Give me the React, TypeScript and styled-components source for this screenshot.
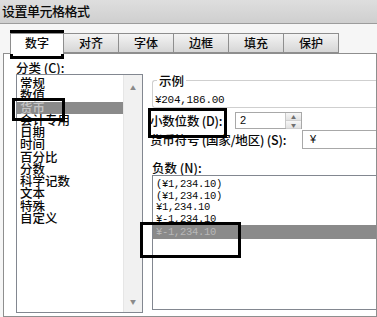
import React from 'react';
import styled, { createGlobalStyle } from 'styled-components';

const GlobalStyle = createGlobalStyle`
  html, body {
    margin: 0;
    padding: 0;
    background: #ffffff;
  }
`;

const categories = [
  '常规',
  '数值',
  '货币',
  '会计专用',
  '日期',
  '时间',
  '百分比',
  '分数',
  '科学记数',
  '文本',
  '特殊',
  '自定义',
];

const tabs = ['数字', '对齐', '字体', '边框', '填充', '保护'];

const negatives = [
  '(¥1,234.10)',
  '(¥1,234.10)',
  '¥1,234.10',
  '¥-1,234.10',
  '¥-1,234.10',
];

const callouts = [
  { x: 10, y: 30, w: 54, h: 29 },
  { x: 12, y: 98, w: 53, h: 23 },
  { x: 148, y: 108, w: 79, h: 30 },
  { x: 140, y: 222, w: 101, h: 36 },
];

export default function App() {
  return (
    <Dialog>
      <GlobalStyle />
      <TitleBar>设置单元格格式</TitleBar>
      <TabRow>
        {tabs.map((t, i) => (
          <Tab key={t} $active={i === 0} $first={i === 0}>
            {t}
          </Tab>
        ))}
      </TabRow>
      <Panel>
        <LeftColumn>
          <FieldLabel>分类 (C):</FieldLabel>
          <CategoryList>
            <CategoryItems>
              {categories.map((c, i) => (
                <CategoryItem key={c} $selected={i === 2}>
                  {c}
                </CategoryItem>
              ))}
            </CategoryItems>
            <ScrollBar>
              <ScrollArrow>▲</ScrollArrow>
              <ScrollArrow>▼</ScrollArrow>
            </ScrollBar>
          </CategoryList>
        </LeftColumn>
        <RightColumn>
          <SampleGroup>
            <SampleLegend>示例</SampleLegend>
            <SampleValue>¥204,186.00</SampleValue>
          </SampleGroup>
          <FormRow $top={4} $height={17}>
            <RowLabel $width={85}>小数位数 (D):</RowLabel>
            <SpinBox>
              <SpinValue>2</SpinValue>
              <SpinButtons>
                <SpinButton>▲</SpinButton>
                <SpinButton>▼</SpinButton>
              </SpinButtons>
            </SpinBox>
          </FormRow>
          <FormRow $top={1} $height={19}>
            <RowLabel $width={152}>货币符号 (国家/地区) (S):</RowLabel>
            <SymbolBox>¥</SymbolBox>
          </FormRow>
          <NegativeLabel>负数 (N):</NegativeLabel>
          <NegativeList>
            {negatives.map((n, i) => (
              <NegativeItem key={i} $selected={i === 4}>
                {n}
              </NegativeItem>
            ))}
          </NegativeList>
        </RightColumn>
      </Panel>
      {callouts.map((c, i) => (
        <Callout key={i} $x={c.x} $y={c.y} $w={c.w} $h={c.h} />
      ))}
    </Dialog>
  );
}

const Dialog = styled.div({
  position: 'relative',
  width: 377,
  height: 317,
  overflow: 'hidden',
  background: '#f6f6f6',
  fontFamily: '"Noto Sans CJK SC", "Liberation Sans", sans-serif',
  fontWeight: 500,
  color: '#0a0a0a',
});

const TitleBar = styled.div({
  height: 24,
  boxSizing: 'border-box',
  paddingLeft: 2,
  background: 'linear-gradient(#dedede, #cfcfcf)',
  borderBottom: '1px solid #9c9c9c',
  fontSize: 13,
  lineHeight: '22px',
  letterSpacing: -0.5,
});

const TabRow = styled.div({
  display: 'flex',
  paddingLeft: 10,
  marginTop: 9,
  height: 20,
  position: 'relative',
  zIndex: 1,
});

const Tab = styled.div<{ $active: boolean; $first: boolean }>(
  ({ $active, $first }) => ({
    boxSizing: 'border-box',
    width: $first ? 54 : 56,
    height: $active ? 21 : 20,
    marginLeft: $first ? 0 : -1,
    border: '1px solid #8e8e8e',
    borderBottom: $active ? 'none' : '1px solid #8e8e8e',
    background: $active ? '#ffffff' : 'linear-gradient(#f4f4f4, #d6d6d6)',
    fontSize: 12,
    lineHeight: '18px',
    textAlign: 'center',
  })
);

const Panel = styled.div({
  display: 'flex',
  boxSizing: 'border-box',
  marginLeft: 3,
  width: 374,
  height: 264,
  border: '1px solid #8e8e8e',
  background: '#ffffff',
  padding: '7px 0 0 12px',
});

const LeftColumn = styled.div({
  display: 'flex',
  flexDirection: 'column',
  width: 127,
  flexShrink: 0,
});

const FieldLabel = styled.div({
  fontSize: 12.5,
  lineHeight: '13px',
  height: 13,
});

const CategoryList = styled.div({
  display: 'flex',
  boxSizing: 'border-box',
  height: 239,
  border: '1px solid #828790',
  background: '#ffffff',
});

const CategoryItems = styled.div({
  flex: 1,
  paddingTop: 2,
});

const CategoryItem = styled.div<{ $selected: boolean }>(({ $selected }) => ({
  height: 12.25,
  paddingLeft: 3,
  fontSize: 12.5,
  lineHeight: '12.25px',
  whiteSpace: 'nowrap',
  background: $selected ? '#8a8a8a' : 'transparent',
  color: $selected ? '#c4c4c4' : '#0a0a0a',
}));

const ScrollBar = styled.div({
  display: 'flex',
  flexDirection: 'column',
  justifyContent: 'space-between',
  width: 18,
  background: '#f1f1f1',
  borderLeft: '1px solid #e6e6e6',
  padding: '9px 0 6px',
});

const ScrollArrow = styled.div({
  fontSize: 6,
  lineHeight: '8px',
  textAlign: 'center',
  color: '#8a8a8a',
});

const RightColumn = styled.div({
  display: 'flex',
  flexDirection: 'column',
  flex: 1,
  minWidth: 0,
  marginLeft: 9,
});

const SampleGroup = styled.fieldset({
  margin: '13px 0 0',
  padding: '0 0 1px 2px',
  border: '1px solid #cfcfcf',
  borderRight: 'none',
  borderRadius: '3px 0 0 3px',
  minWidth: 0,
});

const SampleLegend = styled.legend({
  padding: '0 2px',
  marginLeft: 2,
  fontSize: 12.5,
  lineHeight: '13px',
});

const SampleValue = styled.div({
  marginTop: 7,
  fontFamily: '"Liberation Mono", monospace',
  fontSize: 11,
  lineHeight: '12px',
  letterSpacing: -0.3,
});

const FormRow = styled.div<{ $top: number; $height: number }>(
  ({ $top, $height }) => ({
    display: 'flex',
    alignItems: 'center',
    marginTop: $top,
    height: $height,
  })
);

const RowLabel = styled.div<{ $width: number }>(({ $width }) => ({
  width: $width,
  flexShrink: 0,
  marginLeft: -2,
  fontSize: 12.5,
  lineHeight: '13px',
  whiteSpace: 'nowrap',
  letterSpacing: -0.2,
}));

const SpinBox = styled.div({
  display: 'flex',
  boxSizing: 'border-box',
  width: 67,
  height: 17,
  border: '1px solid #a8a8a8',
  background: '#ffffff',
});

const SpinValue = styled.div({
  flex: 1,
  paddingLeft: 4,
  fontFamily: '"Liberation Sans", sans-serif',
  fontSize: 11,
  lineHeight: '15px',
});

const SpinButtons = styled.div({
  display: 'flex',
  flexDirection: 'column',
  width: 15,
  borderLeft: '1px solid #c8c8c8',
});

const SpinButton = styled.div({
  flex: 1,
  fontSize: 5,
  lineHeight: '7px',
  textAlign: 'center',
  color: '#707070',
  background: 'linear-gradient(#f7f7f7, #e2e2e2)',
  borderBottom: '1px solid #d0d0d0',
});

const SymbolBox = styled.div({
  flex: 1,
  boxSizing: 'border-box',
  height: 19,
  border: '1px solid #a8a8a8',
  borderRight: 'none',
  paddingLeft: 7,
  fontFamily: '"Liberation Sans", sans-serif',
  fontSize: 11,
  lineHeight: '17px',
  background: '#ffffff',
});

const NegativeLabel = styled.div({
  marginTop: 12,
  fontSize: 12.5,
  lineHeight: '13px',
});

const NegativeList = styled.div({
  marginTop: 1,
  boxSizing: 'border-box',
  height: 135,
  border: '1px solid #828790',
  borderRight: 'none',
  paddingTop: 3,
  background: '#ffffff',
});

const NegativeItem = styled.div<{ $selected: boolean }>(({ $selected }) => ({
  height: $selected ? 14 : 11.5,
  paddingLeft: 3,
  fontFamily: '"Liberation Mono", monospace',
  fontSize: 10.5,
  lineHeight: $selected ? '14px' : '11.5px',
  letterSpacing: -0.3,
  background: $selected ? '#8a8a8a' : 'transparent',
  color: $selected ? '#b8b8b8' : '#0a0a0a',
}));

const Callout = styled.div<{ $x: number; $y: number; $w: number; $h: number }>(
  ({ $x, $y, $w, $h }) => ({
    position: 'absolute',
    left: $x,
    top: $y,
    width: $w,
    height: $h,
    boxSizing: 'border-box',
    border: '3px solid #000000',
    pointerEvents: 'none',
  })
);
